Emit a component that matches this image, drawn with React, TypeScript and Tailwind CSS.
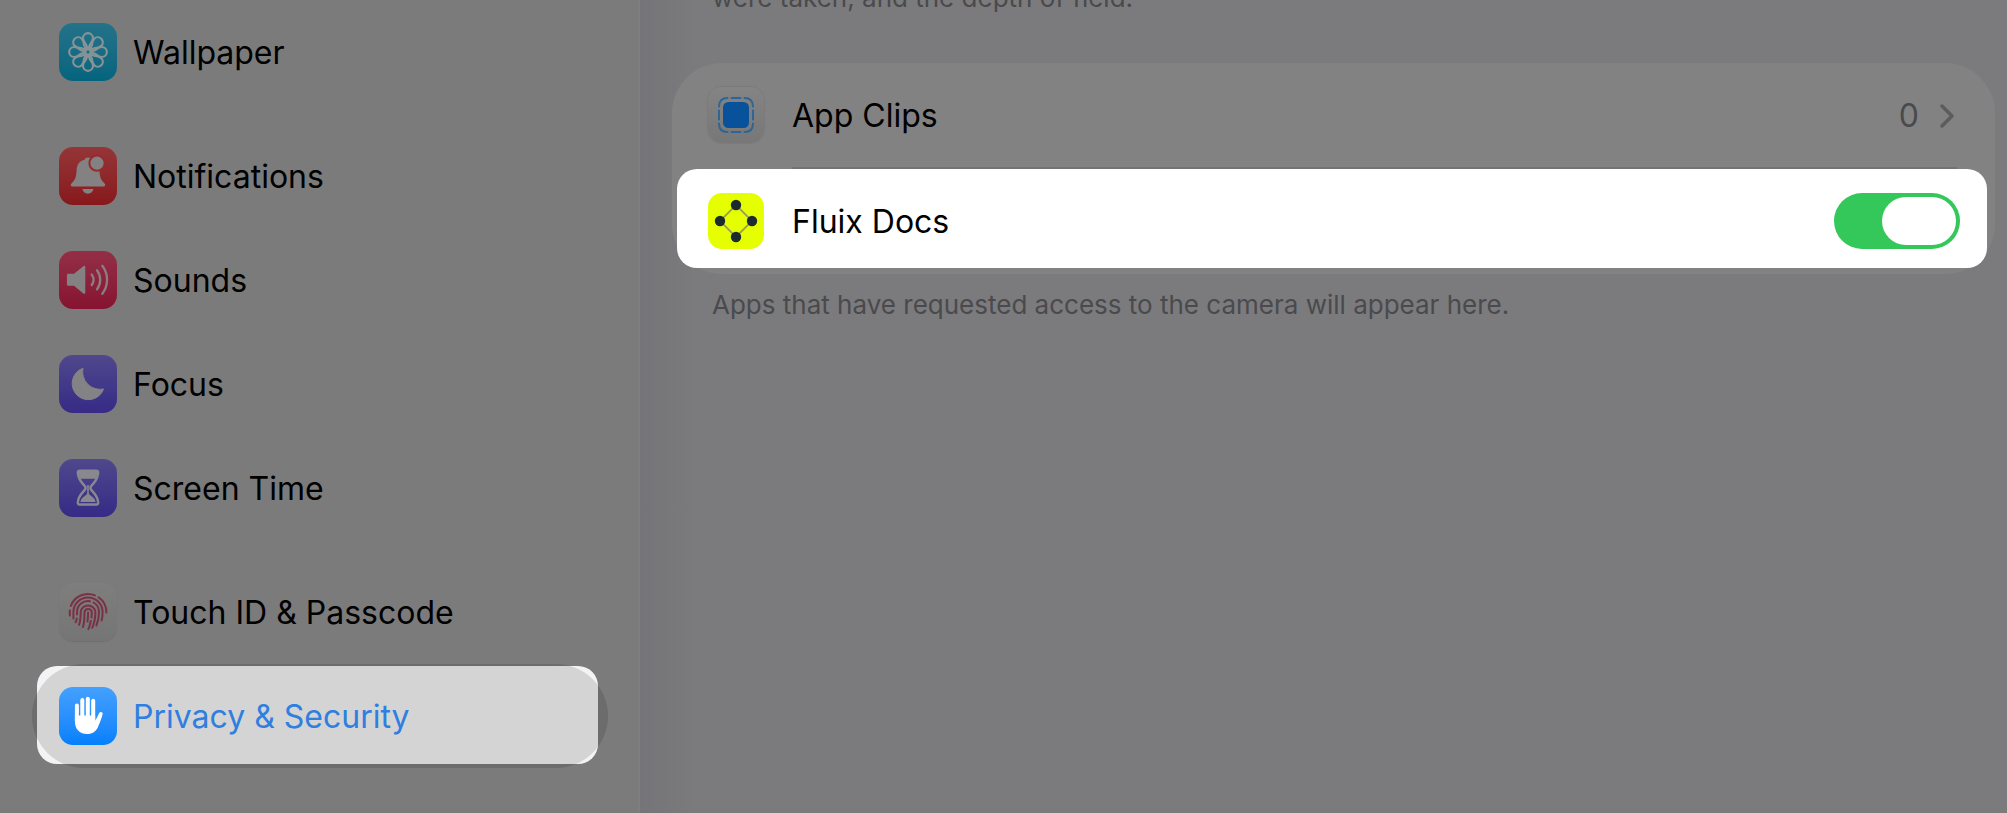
import React, { useState } from "react";

interface IGlyph {
  className?: string;
}

const PETALS = [0, 45, 90, 135, 180, 225, 270, 315];

const WallpaperGlyph: React.FC<IGlyph> = (props) => (
  <svg viewBox="0 0 58 58" fill="none" stroke="#879496" strokeWidth="2.2" {...props}>
    {PETALS.map((angle) => (
      <path
        key={angle}
        transform={`rotate(${angle} 29 29)`}
        d="M29 27 L27 21.500 C25.500 19.500 24 18 24 15.200 A5 5 0 0 1 34 15.200 C34 18 32.500 19.500 31 21.500 Z"
      />
    ))}
    <circle cx="29" cy="29" r="2.4" fill="#1a7188" strokeWidth="1.5" />
  </svg>
);

const BellGlyph: React.FC<IGlyph> = (props) => (
  <svg viewBox="0 0 58 58" {...props}>
    <path
      fill="#838181"
      d="M29 10.5c-1.800 0-3 .8-3.400 2.300C20.500 14 17.800 17.500 17.600 23c-.3 7.500-1.600 9.800-4.600 12.700-1.900 1.900-1.600 3.800.8 3.800h30.400c2.400 0 2.700-1.900.8-3.800-3-2.900-4.300-5.200-4.600-12.700C40.200 15 36 13 32.500 12.800 32 11.200 30.800 10.500 29 10.500z"
    />
    <path fill="#838181" d="M23.400 42h11c-.6 2.900-2.700 4.700-5.500 4.700s-4.900-1.800-5.500-4.700z" />
    <circle cx="38" cy="16.200" r="8.600" fill="#982a2e" />
    <circle cx="38" cy="16.200" r="6.600" fill="#838181" />
  </svg>
);

const SpeakerGlyph: React.FC<IGlyph> = (props) => (
  <svg viewBox="0 0 58 58" {...props}>
    <path
      fill="#838181"
      d="M9.500 22.800h5.500l9-7.400c1.200-1 2.300-.6 2.300 1v24.800c0 1.600-1.100 2-2.300 1l-9-7.400H9.500c-1 0-1.600-.6-1.600-1.600v-8.800c0-1 .6-1.600 1.600-1.600z"
    />
    <g fill="none" stroke="#8b7d82" strokeWidth="2.300" strokeLinecap="round">
      <path d="M32.700 23.500a9 9 0 0 1 0 10.500" />
      <path d="M38 19.200a16 16 0 0 1 0 19.200" />
      <path d="M43.300 14.800a23 23 0 0 1 0 28" />
    </g>
  </svg>
);

const MoonGlyph: React.FC<IGlyph> = (props) => (
  <svg viewBox="0 0 58 58" {...props}>
    <path
      fill="#838284"
      stroke="#838284"
      strokeLinejoin="round"
      d="M24 13.200A16.200 16.200 0 1 0 44.600 34A17.500 17.500 0 0 1 24 13.200z"
    />
  </svg>
);

const HourglassGlyph: React.FC<IGlyph> = (props) => (
  <svg viewBox="0 0 58 58" {...props}>
    <g fill="none" stroke="#8a888f" strokeWidth="2.400" strokeLinejoin="round">
      <path d="M20.500 11.800h17c1.200 0 1.800.8 1.700 2-.5 7-3.500 9.200-7 13.200-.9 1.100-.9 2.800 0 3.900 3.500 4 6.500 6.200 7 12.600.1 1.200-.5 2-1.700 2h-17c-1.200 0-1.800-.8-1.700-2 .5-6.400 3.500-8.600 7-12.600.9-1.100.9-2.800 0-3.900-3.500-4-6.500-6.200-7-13.200-.1-1.200.5-2 1.700-2z" />
      <path d="M29 26v10" strokeWidth="1.600" />
    </g>
    <path fill="#8a888f" d="M19 11.500h20l-1.800 8.300H20.800z" />
    <path fill="#8a888f" d="M29 34c2 3 7.500 4.500 7.500 9h-15c0-4.500 5.500-6 7.500-9z" />
  </svg>
);

const FingerprintGlyph: React.FC<IGlyph> = (props) => (
  <svg
    viewBox="0 0 58 58"
    fill="none"
    stroke="#7a3045"
    strokeWidth="2"
    strokeLinecap="round"
    {...props}
  >
    <path d="M11.800 23A18.200 18.200 0 0 1 36 12.400" />
    <path d="M39.500 14.200A18.200 18.200 0 0 1 47.400 29.500" />
    <path d="M10.800 27.500v5" />
    <path d="M14.400 35.500v-6.500a14.600 14.600 0 0 1 29.200 0c0 3.500-.2 6-1 8.500" />
    <path d="M18 31.500v-2.500a11 11 0 0 1 13-10.800" />
    <path d="M34.500 19.500a11 11 0 0 1 5.500 9.500c0 5.500-.8 9.500-2.600 13.500" />
    <path d="M17.800 35.500c-.2 1.500-.6 2.600-1.200 3.700" />
    <path d="M20 41.800c1.400-3.600 1.700-7.800 1.700-12.800a7.400 7.400 0 0 1 14.700 0c0 6-1 11-3.200 15.800" />
    <path d="M24 44c1.200-4 1.500-9 1.500-15a3.700 3.700 0 0 1 7.300 0c0 2-.1 4-.3 5.500" />
    <path d="M31.800 38c-.5 3-1.300 5.600-2.400 8.200" />
    <path d="M29.100 29.500c0 3.500-.2 6.500-.6 9" />
  </svg>
);

const HandGlyph: React.FC<IGlyph> = (props) => (
  <svg viewBox="0 0 58 58" fill="#fff" {...props}>
    <g stroke="#fff" strokeWidth="4" strokeLinecap="round">
      <path d="M17.900 18.500V34M23.300 13V34M28.800 11.800V34M34.200 13.800V34" />
    </g>
    <path d="M15.900 28.500h20.300v5.200c1.600-2.300 2.800-5.600 4-7.700 1.200-1.700 4-.8 3.400 1.300-.9 3.700-2.800 8.700-4.600 12.700-2.200 4.700-5.700 7-10.600 7-8 0-12.500-4.700-12.500-13z" />
  </svg>
);

const AppClipsGlyph: React.FC<IGlyph> = (props) => (
  <svg viewBox="0 0 56 56" {...props}>
    <rect x="15" y="15" width="26" height="26" rx="5.500" fill="#07529a" />
    <g fill="none" stroke="#2c6596" strokeWidth="2" strokeLinecap="round">
      <path d="M23.500 11h9M23.500 45h9M11 23.500v9M45 23.500v9" />
      <path d="M11 19.500c0-5.500 3-8.500 8.500-8.500M36.500 11c5.500 0 8.500 3 8.500 8.500M45 36.500c0 5.500-3 8.500-8.500 8.500M19.500 45c-5.500 0-8.500-3-8.500-8.500" />
    </g>
  </svg>
);

const FluixGlyph: React.FC<IGlyph> = (props) => (
  <svg viewBox="0 0 56 56" {...props}>
    <path d="M28 12 44 28 28 44 12 28z" fill="none" stroke="#98a05c" strokeWidth="1.800" />
    <g fill="#1b2b2e">
      <circle cx="28" cy="12" r="5.2" />
      <circle cx="44" cy="28" r="5.2" />
      <circle cx="28" cy="44" r="5.2" />
      <circle cx="12" cy="28" r="5.2" />
    </g>
  </svg>
);

interface IMenuItem {
  label: string;
  tile: string;
  Glyph: React.FC<IGlyph>;
}

const sections: IMenuItem[][] = [
  [{ label: "Wallpaper", tile: "from-[#237389] to-[#05647e]", Glyph: WallpaperGlyph }],
  [
    { label: "Notifications", tile: "from-[#953538] to-[#87181c]", Glyph: BellGlyph },
    { label: "Sounds", tile: "from-[#942e47] to-[#861331]", Glyph: SpeakerGlyph },
    { label: "Focus", tile: "from-[#4f488c] to-[#362a86]", Glyph: MoonGlyph },
    { label: "Screen Time", tile: "from-[#4f488c] to-[#362a86]", Glyph: HourglassGlyph },
  ],
  [
    {
      label: "Touch ID & Passcode",
      tile: "from-[#7e7e7e] to-[#757575] shadow-[0_1px_1px_#6f6f6f]",
      Glyph: FingerprintGlyph,
    },
  ],
];

const MenuRow: React.FC<IMenuItem> = ({ label, tile, Glyph }) => (
  <button className="flex h-[104px] w-full items-center gap-4 pl-[59px] text-left text-[32px]">
    <span className={`size-[58px] rounded-[14px] bg-linear-to-b ${tile}`}>
      <Glyph className="size-full" />
    </span>
    <span className="pt-[2px]">{label}</span>
  </button>
);

const Sidebar: React.FC = () => (
  <nav className="w-[640px] shrink-0 border-r-2 border-[#7f7e7f] bg-[#7b7b7c]">
    <div className="flex flex-col gap-5">
      {sections.map((items) => (
        <div key={items[0].label}>
          {items.map((item) => (
            <MenuRow key={item.label} {...item} />
          ))}
        </div>
      ))}
    </div>
    <button className="relative ml-8 flex h-[104px] w-[576px] items-center gap-4 rounded-full bg-[#6c6c6c] pl-[27px] text-left text-[32px] text-[#2f7fe0]">
      <span className="absolute top-[2px] right-[10px] bottom-[4px] left-[5px] overflow-hidden rounded-[20px] bg-[#f3f3f5]">
        <span className="absolute -top-[2px] -right-[10px] -bottom-[4px] -left-[5px] rounded-full bg-[#d4d4d4]" />
      </span>
      <span className="relative size-[58px] rounded-[14px] bg-linear-to-b from-[#43a0ff] to-[#0080fb]">
        <HandGlyph className="size-full" />
      </span>
      <span className="relative pt-[2px]">Privacy &amp; Security</span>
    </button>
  </nav>
);

export default function App() {
  const [allowed, setAllowed] = useState<boolean>(true);

  return (
    <div className="flex min-h-screen overflow-hidden bg-[#7b7b7d] font-['Inter','Liberation_Sans',sans-serif] text-black">
      <Sidebar />
      <main className="min-w-0 grow bg-linear-to-r from-[#757579] to-[#7b7b7d] to-[60px] pr-3 pl-8">
        <p className="-mt-[18px] pl-10 text-[26px] leading-8 text-[#4a4a4d]">
          were taken, and the depth of field.
        </p>
        <section className="mt-[49px] rounded-[50px] bg-[#828282]">
          <button className="flex h-[104px] w-full items-center gap-7 pr-10 pl-9 text-left text-[32px]">
            <span className="size-[56px] rounded-[14px] bg-linear-to-b from-[#848484] to-[#777777] shadow-[0_0_1px_1px_#7b7b7b]">
              <AppClipsGlyph className="size-full" />
            </span>
            <span className="grow pt-[2px]">App Clips</span>
            <span className="flex items-center gap-5 pt-[2px] text-[#4a4a4c]">
              0
              <svg
                className="h-7 w-4"
                viewBox="0 0 16 28"
                fill="none"
                stroke="#5c5c5d"
                strokeWidth="3.500"
                strokeLinecap="round"
                strokeLinejoin="round"
              >
                <path d="M3 4 13 14 3 24" />
              </svg>
            </span>
          </button>
          <div className="mr-[38px] ml-[120px] h-[2px] bg-[#737374]" />
          <div className="pr-2 pb-[6px] pl-[5px]">
            <label className="flex h-[99px] items-center gap-7 rounded-[20px] bg-white pt-1 pr-[27px] pl-[31px] text-[32px]">
              <span className="size-[56px] rounded-[14px] bg-[#e6ff00]">
                <FluixGlyph className="size-full" />
              </span>
              <span className="grow pt-[2px]">Fluix Docs</span>
              <input
                type="checkbox"
                role="switch"
                checked={allowed}
                onChange={(e) => setAllowed(e.target.checked)}
                className="flex h-14 w-[126px] appearance-none items-center rounded-full bg-gray-300 p-1 before:h-12 before:w-[74px] before:rounded-full before:bg-white checked:justify-end checked:bg-[#34c759]"
              />
            </label>
          </div>
        </section>
        <p className="mt-[15px] pl-10 text-[26px] leading-8 text-[#4a4a4d]">
          Apps that have requested access to the camera will appear here.
        </p>
      </main>
    </div>
  );
}
